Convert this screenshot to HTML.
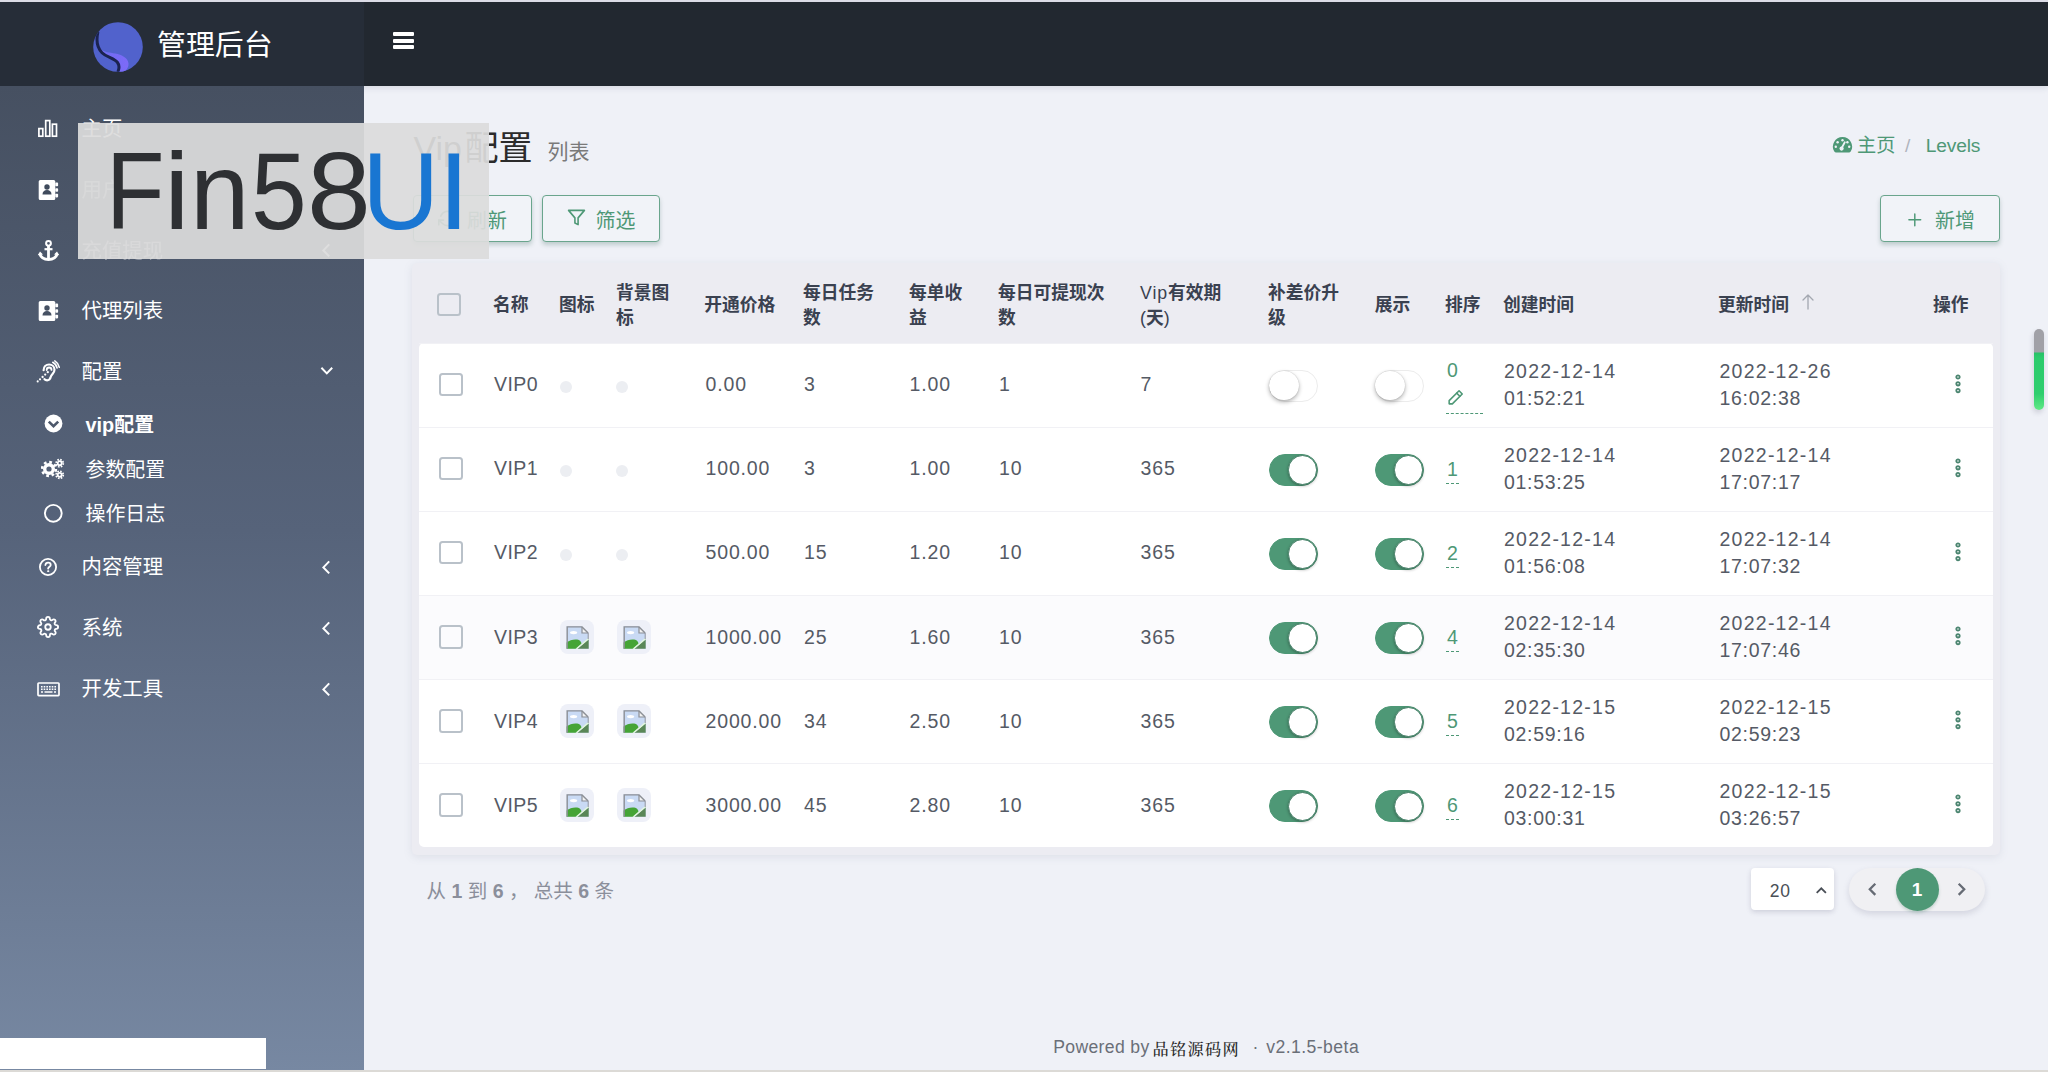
<!DOCTYPE html>
<html lang="zh-CN">
<head>
<meta charset="utf-8">
<title>管理后台</title>
<style>
*{box-sizing:border-box;margin:0;padding:0}
html,body{width:2048px;height:1072px;overflow:hidden}
body{position:relative;background:#eff1f7;font-family:"Liberation Sans","Noto Sans CJK SC",sans-serif;color:#414750;font-size:19.5px}
.abs,.row,.row>span,.side span,.side svg,.hd span{position:absolute}
#topline{position:absolute;left:0;top:0;width:2048px;height:2px;background:#dcdce6;z-index:9}
#nav{position:absolute;left:0;top:0;width:2048px;height:85.6px;background:#222830;box-shadow:0 2px 6px rgba(40,50,80,.12)}
#navl{position:absolute;left:0;top:0;width:364px;height:86px;background:#262d38}
#side{position:absolute;left:0;top:85.8px;width:364px;height:986.2px;background:linear-gradient(180deg,#465061 0%,#56637a 45%,#7788a2 100%)}
.logo{position:absolute;left:92.6px;top:21.6px;width:50px;height:50px}
.brand{position:absolute;left:157px;top:23.5px;font-size:28.9px;line-height:42px;color:#fff;white-space:nowrap}
.burger{position:absolute;left:393px;top:32px;width:21px;height:17px}
.burger i{position:absolute;left:0;width:21px;height:4px;background:#fff;border-radius:1px}
.mi{position:absolute;left:81.6px;color:#fff;font-size:20.4px;line-height:30px;white-space:nowrap}
.mi.sub{left:85.5px;font-size:19.9px}
.mi.b{font-weight:bold}
.ico{position:absolute}
.chev{position:absolute}
.title{position:absolute;left:414px;top:123px;font-size:34px;line-height:50px;color:#2b2b2b;white-space:nowrap}
.subt{position:absolute;left:547.5px;top:136px;font-size:21px;line-height:32px;color:#7a7a7a;white-space:nowrap}
.btn{position:absolute;top:194.7px;height:47.6px;border:1.2px solid #6aa58d;border-radius:4px;color:#4e9876;font-size:19.9px;line-height:48px;white-space:nowrap;background:#f1f3f8;box-shadow:0 3px 4px rgba(70,110,100,.28)}
.bc{position:absolute;top:130.8px;font-size:19.2px;line-height:30px;white-space:nowrap;color:#4e9876}
.card{position:absolute;left:412px;top:263px;width:1588px;height:592px;background:#ececf2;border-radius:5px;box-shadow:0 2px 8px rgba(120,125,150,.15)}
.tbody{position:absolute;left:419px;top:342.5px;width:1574px;height:504.3px;background:#fff;border-radius:5px}
.th{position:absolute;font-weight:bold;font-size:17.75px;line-height:24.8px;color:#3a4150;white-space:nowrap}
.row{left:419px;width:1574px;border-top:1px solid #f1f1f5}
.row:first-of-type{border-top:none}
.row .c{font-size:19.5px;line-height:28px;color:#555a65;white-space:nowrap;letter-spacing:.85px}
.row .nm{letter-spacing:.45px}
.tm{letter-spacing:.7px}
.row .dt{line-height:27.3px;letter-spacing:1.25px}
.cb{width:23.5px;height:23.5px;border:2px solid #b9c1c9;border-radius:3.5px;background:transparent}
.dot{width:12px;height:12px;border-radius:50%;background:#eceef2}
.imgbox{width:33.5px;height:34.2px;border-radius:8px;background:#eef0f8}
.imgbox svg{position:absolute;left:0;top:0}
.sw{width:49px;height:32px;border-radius:16px;background:#fff;border:1px solid #ececec}
.sw i{position:absolute;left:-.3px;top:.2px;width:29.4px;height:29.4px;border-radius:50%;background:#fff;box-shadow:0 2px 4px rgba(0,0,0,.3),0 0 1px rgba(0,0,0,.25)}
.sw.on{background:#4e9876;border-color:#4e9876}
.sw.on i{left:18.4px;top:.4px;width:29.2px;height:29.2px;border:1px solid #437f66;box-shadow:0 1px 3px rgba(0,0,0,.3)}
.ord{color:#4e9876;font-size:19.5px;line-height:28px;border-bottom:1px dashed #4e9876;white-space:nowrap;padding:0 1px}
.ord.first{width:37px;height:56.6px;line-height:26px}
.ord.first svg{position:absolute;left:0;top:30.8px}
.dots{width:10px;height:24px}.dots svg{display:block}
.dots i{position:absolute;left:.9px;width:5.3px;height:5.3px;border-radius:50%;border:1.85px solid #4b8570}
.dots i:nth-child(1){top:0}.dots i:nth-child(2){top:6.8px}.dots i:nth-child(3){top:13.6px}
.pginfo{position:absolute;left:426.5px;top:875.6px;font-size:19.5px;line-height:30px;color:#8b8f9b;white-space:nowrap}
.pginfo b{letter-spacing:0}
.sel{position:absolute;left:1750.7px;top:867.8px;width:83.3px;height:41.9px;background:#fff;border-radius:4px;box-shadow:0 2px 5px rgba(100,100,130,.24)}
.pill{position:absolute;left:1849.2px;top:867.6px;width:135.8px;height:43px;border-radius:22px;background:#f0f0f3;box-shadow:0 3px 6px rgba(100,100,130,.2)}
.pg1{position:absolute;left:1895.6px;top:867.7px;width:43px;height:43px;border-radius:50%;background:#4e9876;color:#fff;font-weight:bold;font-size:19px;line-height:43px;text-align:center;box-shadow:0 2px 3px rgba(60,120,90,.25)}
.foot{position:absolute;top:1032px;font-size:17.6px;line-height:30px;color:#6a6f78;white-space:nowrap}
.wm{position:absolute;left:78px;top:123px;width:411.3px;height:136.3px;background:rgba(219,219,219,.93)}
.wmt{position:absolute;top:136.3px;font-size:110px;line-height:110px;white-space:nowrap;color:#2e3033;transform-origin:0 0}
.wmt.bl{color:#1976d2}
.scr{position:absolute;left:2033.8px;top:329px;width:10px;height:80.7px;border-radius:5px;background:linear-gradient(180deg,#a1a1a7 0,#a1a1a7 28.5%,#27c267 29.5%,#2ccb6c 36%,#2fce6e 80%,#60e985 100%);box-shadow:-1px 3px 5px rgba(60,60,90,.18)}
.wbox{position:absolute;left:0;top:1038px;width:266px;height:31px;background:#fff}
.botline{position:absolute;left:0;top:1069.600px;width:2048px;height:2.400px;background:#dcdad6}

</style>
</head>
<body>
<div id="nav"></div>
<div id="navl"></div>
<div id="topline"></div>
<div id="side"></div>

<!-- logo -->
<svg class="logo" viewBox="0 0 50 50">
  <defs><clipPath id="lc"><circle cx="25" cy="25" r="24.8"/></clipPath>
  <filter id="lb" x="-20%" y="-20%" width="140%" height="140%"><feGaussianBlur stdDeviation="0.7"/></filter>
  <linearGradient id="lg" x1="0" y1="0" x2="1" y2="0"><stop offset="0" stop-color="#6d6cf0"/><stop offset="1" stop-color="#7d6bf8"/></linearGradient></defs>
  <circle cx="25" cy="25" r="24.8" fill="#5162cc"/>
  <g clip-path="url(#lc)">
    <path d="M7 26.500C11 30.500 17 30.500 22 31.500c7 1.300 13 4.500 13.500 10 .3 3-1.500 6-4 8.500h-5.500c1-3 1.500-6-1-9C21 36.500 13 36 7 26.500z" fill="url(#lg)" filter="url(#lb)"/>
    <path d="M4.800 10.500C3 19 4.300 26 9 30.700c5 5 12 5.300 15.500 9.800 2 2.600 1.800 5.500.7 8.500" fill="none" stroke="#1b2350" stroke-width="3" stroke-linecap="round"/>
  </g>
</svg>
<div class="brand">管理后台</div>
<div class="burger"><i style="top:0"></i><i style="top:6.7px"></i><i style="top:13.4px"></i></div>

<!-- sidebar menu -->
<div class="mi" style="top:114.3px">主页</div>
<div class="mi" style="top:175.3px;opacity:.55">用户</div>
<div class="mi" style="top:236.3px;opacity:.6">充值提现</div>
<div class="mi" style="top:296.3px">代理列表</div>
<div class="mi" style="top:357.3px">配置</div>
<div class="mi sub b" style="top:410.3px">vip配置</div>
<div class="mi sub" style="top:455.3px">参数配置</div>
<div class="mi sub" style="top:499.3px">操作日志</div>
<div class="mi" style="top:552.3px">内容管理</div>
<div class="mi" style="top:613.3px">系统</div>
<div class="mi" style="top:674.3px">开发工具</div>

<!-- icons -->
<svg class="ico" style="left:37px;top:118px" width="22" height="20" viewBox="0 0 22 20" fill="none" stroke="#fff" stroke-width="1.7"><rect x="1.9" y="10.6" width="3.9" height="7.6"/><rect x="8.7" y="2.6" width="4.1" height="15.6"/><rect x="15.4" y="6.2" width="4.1" height="12"/></svg>

<svg class="ico" style="left:38px;top:179px" width="21" height="22" viewBox="0 0 21 22"><path d="M2.3 1h13.4a1.6 1.6 0 0 1 1.6 1.6v16.8a1.6 1.6 0 0 1-1.6 1.6H2.3a1.6 1.6 0 0 1-1.6-1.6V2.600a1.6 1.600 0 0 1 1.600-1.600z" fill="#fff"/><rect x="17.3" y="3.6" width="2.8" height="3.6" rx=".8" fill="#fff"/><rect x="17.3" y="9.2" width="2.8" height="3.600" rx=".8" fill="#fff"/><rect x="17.3" y="14.8" width="2.8" height="3.600" rx=".8" fill="#fff"/><circle cx="9" cy="8" r="2.7" fill="#3f4a5c"/><path d="M4.500 15.500c0-3 1.800-4.600 4.500-4.600s4.500 1.600 4.500 4.600z" fill="#3f4a5c"/></svg>

<svg class="ico" style="left:37px;top:239px" width="23" height="23" viewBox="0 0 23 23" fill="none" stroke="#fff"><circle cx="11.5" cy="4.300" r="2.400" stroke-width="2"/><path d="M11.500 6.700V20" stroke-width="2.800"/><path d="M7.500 10.200h8" stroke-width="2.200"/><path d="M2.600 14.500c1.200 4 4.800 6 8.900 6s7.700-2 8.900-6" stroke-width="2.800"/><path d="M0.800 16.200l2.200-3.800 3 3.200z" fill="#fff" stroke="none"/><path d="M22.200 16.200l-2.200-3.800-3 3.200z" fill="#fff" stroke="none"/></svg>

<svg class="ico" style="left:38px;top:299.500px" width="21" height="22" viewBox="0 0 21 22"><path d="M2.3 1h13.4a1.6 1.6 0 0 1 1.6 1.6v16.8a1.6 1.6 0 0 1-1.6 1.6H2.3a1.6 1.6 0 0 1-1.6-1.6V2.600a1.6 1.600 0 0 1 1.600-1.600z" fill="#fff"/><rect x="17.3" y="3.6" width="2.8" height="3.6" rx=".8" fill="#fff"/><rect x="17.3" y="9.2" width="2.8" height="3.600" rx=".8" fill="#fff"/><rect x="17.3" y="14.8" width="2.8" height="3.600" rx=".8" fill="#fff"/><circle cx="9" cy="8" r="2.7" fill="#465163"/><path d="M4.500 15.500c0-3 1.800-4.600 4.500-4.600s4.500 1.600 4.500 4.600z" fill="#465163"/></svg>

<!-- ear / assistive listening -->
<svg class="ico" style="left:36px;top:360px" width="24" height="23" viewBox="0 0 24 23" fill="none" stroke="#fff" stroke-linecap="round"><path d="M7.600 10.200c0-3.500 2.500-5.700 5.500-5.700s5.400 2.200 5.400 5.300c0 3.500-3 4.200-3.700 7-.5 2-1.700 3.500-3.700 3.500-1.100 0-2-.4-2.600-1.100" stroke-width="2.200"/><path d="M10.700 10c0-1.500 1-2.500 2.400-2.500s2.400 1 2.400 2.400" stroke-width="1.800"/><path d="M16.800 2.300c2.200 1.200 3.700 3.200 4.200 5.600" stroke-width="1.700"/><path d="M18.800 0.900c2.300 1.500 3.900 3.700 4.500 6.400" stroke-width="1.500"/><circle cx="11.800" cy="12.200" r="1.150" fill="#fff" stroke="none"/><circle cx="9.200" cy="14.600" r="1.150" fill="#fff" stroke="none"/><circle cx="6.600" cy="17" r="1.150" fill="#fff" stroke="none"/><circle cx="4" cy="19.300" r="1.100" fill="#fff" stroke="none"/><circle cx="1.700" cy="21.400" r="1.050" fill="#fff" stroke="none"/></svg>

<!-- chevron circle down -->
<svg class="ico" style="left:44px;top:414.200px" width="19" height="19" viewBox="0 0 19 19"><circle cx="9.500" cy="9.500" r="8.900" fill="#fff"/><path d="M4.800 7.600l4.700 4.600 4.700-4.600" fill="none" stroke="#4d586b" stroke-width="2.600"/></svg>

<!-- cogs -->
<svg class="ico" style="left:41px;top:458px" width="24" height="22" viewBox="0 0 24 22" fill="none" stroke="#fff"><circle cx="8" cy="11" r="4.300" stroke-width="3.400"/><circle cx="8" cy="11" r="6.900" stroke-width="2.600" stroke-dasharray="2.700 2.720"/><circle cx="18.700" cy="5.200" r="2" stroke-width="1.800"/><circle cx="18.700" cy="5.200" r="3.600" stroke-width="1.700" stroke-dasharray="1.600 1.230"/><circle cx="18.700" cy="16.800" r="2" stroke-width="1.800"/><circle cx="18.700" cy="16.800" r="3.600" stroke-width="1.700" stroke-dasharray="1.600 1.230"/></svg>

<!-- circle-o -->
<svg class="ico" style="left:43px;top:503px" width="21" height="21" viewBox="0 0 21 21"><circle cx="10.300" cy="10.300" r="8.400" fill="none" stroke="#fff" stroke-width="1.900"/></svg>

<!-- question circle -->
<svg class="ico" style="left:37.500px;top:556.500px" width="20" height="20" viewBox="0 0 20 20" fill="none" stroke="#fff" stroke-width="1.800" stroke-linecap="round"><circle cx="10" cy="10" r="8.100"/><path d="M7.400 8c.2-1.500 1.300-2.300 2.700-2.300 1.500 0 2.600.9 2.600 2.200 0 1.700-2.500 1.900-2.600 3.700" /><circle cx="10.100" cy="14.200" r=".6" fill="#fff" stroke-width="1"/></svg>

<!-- gear (feather settings) -->
<svg class="ico" style="left:36.500px;top:616px" width="22" height="22" viewBox="0 0 24 24" fill="none" stroke="#fff" stroke-width="2" stroke-linecap="round" stroke-linejoin="round"><circle cx="12" cy="12" r="3"/><path d="M19.400 15a1.650 1.650 0 0 0 .33 1.820l.06.060a2 2 0 0 1 0 2.830 2 2 0 0 1-2.830 0l-.06-.06a1.650 1.650 0 0 0-1.820-.33 1.650 1.650 0 0 0-1 1.510V21a2 2 0 0 1-2 2 2 2 0 0 1-2-2v-.09A1.650 1.650 0 0 0 9 19.400a1.650 1.650 0 0 0-1.820.33l-.06.060a2 2 0 0 1-2.830 0 2 2 0 0 1 0-2.830l.06-.06a1.650 1.650 0 0 0 .33-1.820 1.650 1.650 0 0 0-1.510-1H3a2 2 0 0 1-2-2 2 2 0 0 1 2-2h.09A1.650 1.650 0 0 0 4.600 9a1.650 1.650 0 0 0-.33-1.820l-.06-.06a2 2 0 0 1 0-2.830 2 2 0 0 1 2.830 0l.06.060a1.650 1.650 0 0 0 1.820.33H9a1.650 1.650 0 0 0 1-1.510V3a2 2 0 0 1 2-2 2 2 0 0 1 2 2v.09a1.650 1.650 0 0 0 1 1.510 1.650 1.650 0 0 0 1.820-.33l.06-.06a2 2 0 0 1 2.830 0 2 2 0 0 1 0 2.830l-.06.060a1.650 1.650 0 0 0-.33 1.820V9a1.650 1.650 0 0 0 1.510 1H21a2 2 0 0 1 2 2 2 2 0 0 1-2 2h-.09a1.650 1.650 0 0 0-1.510 1z"/></svg>

<!-- keyboard -->
<svg class="ico" style="left:36.500px;top:681.500px" width="23" height="15" viewBox="0 0 23 15" fill="none" stroke="#fff"><rect x="1" y="1" width="21" height="12.600" rx=".8" stroke-width="1.700"/><path d="M4 4.800h15M4 7.300h15" stroke-width="1.500" stroke-dasharray="1.600 1.080"/><path d="M4 10h2M7.500 10h8M17 10h2" stroke-width="1.500"/></svg>

<!-- chevrons -->
<svg class="chev" style="left:320px;top:366px" width="14" height="10" viewBox="0 0 14 10" fill="none" stroke="#fff" stroke-width="2"><path d="M1.400 1.800l5.400 5.600 5.400-5.600"/></svg>
<svg class="chev" style="left:321px;top:560px" width="10" height="15" viewBox="0 0 10 15" fill="none" stroke="#fff" stroke-width="2"><path d="M8.200 1.400l-5.800 6 5.800 6"/></svg>
<svg class="chev" style="left:321px;top:621px" width="10" height="15" viewBox="0 0 10 15" fill="none" stroke="#fff" stroke-width="2"><path d="M8.200 1.400l-5.800 6 5.800 6"/></svg>
<svg class="chev" style="left:321px;top:682px" width="10" height="15" viewBox="0 0 10 15" fill="none" stroke="#fff" stroke-width="2"><path d="M8.200 1.400l-5.800 6 5.800 6"/></svg>
<svg class="chev" style="left:321px;top:243px" width="10" height="15" viewBox="0 0 10 15" fill="none" stroke="#fff" stroke-width="2"><path d="M8.200 1.400l-5.800 6 5.800 6"/></svg>

<div class="wbox"></div>

<!-- content header -->
<div class="title" style="left:413.5px">Vip<span style="margin-left:2.4px">配置</span></div>
<div class="subt">列表</div>
<div class="bc" style="left:1857px">主页</div>
<div class="bc" style="left:1905px;color:#b0b4bd">/</div>
<div class="bc" style="left:1925.700px;letter-spacing:-.15px">Levels</div>
<svg class="abs" style="left:1832px;top:136px" width="21" height="18" viewBox="0 0 21 18"><path d="M10.500 1a9.600 9.600 0 0 0-8.200 14.600c.3.500.8.800 1.400.8h13.600c.6 0 1.100-.3 1.400-.8A9.600 9.600 0 0 0 10.500 1z" fill="#4e9876"/><circle cx="10.500" cy="4.200" r="1.200" fill="#eff1f7"/><circle cx="5.600" cy="6.200" r="1.200" fill="#eff1f7"/><circle cx="15.400" cy="6.200" r="1.200" fill="#eff1f7"/><circle cx="3.800" cy="10.800" r="1.200" fill="#eff1f7"/><circle cx="17.200" cy="10.800" r="1.200" fill="#eff1f7"/><path d="M9 13.200l3.800-7" stroke="#eff1f7" stroke-width="1.800" stroke-linecap="round"/><circle cx="9.600" cy="12.600" r="2.100" fill="#eff1f7"/></svg>

<div class="btn" style="left:413px;width:118.500px"><svg class="abs" style="left:24px;top:13px" width="19" height="19" viewBox="0 0 24 24" fill="none" stroke="#4e9876" stroke-width="2" stroke-linecap="round" stroke-linejoin="round"><path d="M23 4v6h-6"/><path d="M1 20v-6h6"/><path d="M3.500 9a9 9 0 0 1 14.850-3.360L23 10M1 14l4.640 4.360A9 9 0 0 0 20.500 15"/></svg><span class="abs" style="left:53px;top:1.2px">刷新</span></div>
<div class="btn" style="left:541.500px;width:118px"><svg class="abs" style="left:24.500px;top:12.500px" width="19" height="19" viewBox="0 0 24 24" fill="none" stroke="#4e9876" stroke-width="2" stroke-linecap="round" stroke-linejoin="round"><path d="M22 3H2l8 9.460V19l4 2v-8.540z"/></svg><span class="abs" style="left:53px;top:1.2px">筛选</span></div>
<div class="btn" style="left:1880px;width:120px"><svg class="abs" style="left:27.3px;top:17.3px" width="13.6" height="13.6" viewBox="0 0 15 15" fill="none" stroke="#4e9876" stroke-width="1.600" stroke-linecap="round"><path d="M7.500 1v13M1 7.500h13"/></svg><span class="abs" style="left:54px;top:1.2px">新增</span></div>

<!-- table -->
<div class="card"></div>
<div class="tbody"></div>
<span class="cb abs" style="left:437px;top:292.500px"></span>
<div class="th" style="left:493px;top:292.7px">名称</div>
<div class="th" style="left:559px;top:292.7px">图标</div>
<div class="th" style="left:616px;top:280.8px">背景图<br>标</div>
<div class="th" style="left:704.2px;top:292.7px">开通价格</div>
<div class="th" style="left:803px;top:280.8px">每日任务<br>数</div>
<div class="th" style="left:909px;top:280.8px">每单收<br>益</div>
<div class="th" style="left:998px;top:280.8px">每日可提现次<br>数</div>
<div class="th" style="left:1140px;top:280.8px"><span style="font-weight:normal;letter-spacing:.9px">Vip</span>有效期<br><span style="font-weight:normal">(</span>天<span style="font-weight:normal">)</span></div>
<div class="th" style="left:1267.9px;top:280.8px">补差价升<br>级</div>
<div class="th" style="left:1374.8px;top:292.7px">展示</div>
<div class="th" style="left:1445px;top:292.7px">排序</div>
<div class="th" style="left:1503px;top:292.7px">创建时间</div>
<div class="th" style="left:1718px;top:292.7px">更新时间</div>
<svg class="abs" style="left:1801px;top:293px" width="14" height="18" viewBox="0 0 14 18" fill="none" stroke="#a3a7b0" stroke-width="1.300" stroke-linecap="round" stroke-linejoin="round"><path d="M7 16V2M2 7l5-5 5 5"/></svg>
<div class="th" style="left:1933px;top:292.7px">操作</div>
<div class="row" style="top:342.50px;height:84.05px">
<span class="cb" style="left:20.3px;top:29.4px"></span>
<span class="c nm" style="left:75px;top:26.9px">VIP0</span>
<span class="dot" style="left:141px;top:37.3px"></span>
<span class="dot" style="left:197.3px;top:37.3px"></span>
<span class="c" style="left:286.5px;top:26.9px">0.00</span>
<span class="c" style="left:385px;top:26.9px">3</span>
<span class="c" style="left:490.5px;top:26.9px">1.00</span>
<span class="c" style="left:580px;top:26.9px">1</span>
<span class="c" style="left:721.5px;top:26.9px">7</span>
<span class="sw" style="left:849.5px;top:26.4px"><i></i></span>
<span class="sw" style="left:955.5px;top:26.4px"><i></i></span>
<span class="ord first" style="left:1027px;top:13.6px">0<br><svg width="19" height="19" viewBox="0 0 24 24" fill="none" stroke="#4e9876" stroke-width="2" stroke-linecap="round" stroke-linejoin="round"><path d="M16.5 3.5l4 4L8 20H4v-4z"/><path d="M13.5 6.5l4 4"/></svg></span>
<span class="c dt" style="left:1085px;top:14.3px">2022-12-14<br><span class="tm">01:52:21</span></span>
<span class="c dt" style="left:1300.5px;top:14.3px">2022-12-26<br><span class="tm">16:02:38</span></span>
<span class="dots" style="left:1534px;top:28.5px"><svg width="10" height="24" viewBox="0 0 10 24" fill="none" stroke="#4b8570" stroke-width="1.8"><circle cx="5" cy="5" r="1.7"/><circle cx="5" cy="11.8" r="1.7"/><circle cx="5" cy="18.6" r="1.7"/></svg></span>
</div>
<div class="row" style="top:426.55px;height:84.05px">
<span class="cb" style="left:20.3px;top:29.4px"></span>
<span class="c nm" style="left:75px;top:26.9px">VIP1</span>
<span class="dot" style="left:141px;top:37.3px"></span>
<span class="dot" style="left:197.3px;top:37.3px"></span>
<span class="c" style="left:286.5px;top:26.9px">100.00</span>
<span class="c" style="left:385px;top:26.9px">3</span>
<span class="c" style="left:490.5px;top:26.9px">1.00</span>
<span class="c" style="left:580px;top:26.9px">10</span>
<span class="c" style="left:721.5px;top:26.9px">365</span>
<span class="sw on" style="left:849.5px;top:26.4px"><i></i></span>
<span class="sw on" style="left:955.5px;top:26.4px"><i></i></span>
<span class="ord" style="left:1027px;top:27.7px">1</span>
<span class="c dt" style="left:1085px;top:14.3px">2022-12-14<br><span class="tm">01:53:25</span></span>
<span class="c dt" style="left:1300.5px;top:14.3px">2022-12-14<br><span class="tm">17:07:17</span></span>
<span class="dots" style="left:1534px;top:28.5px"><svg width="10" height="24" viewBox="0 0 10 24" fill="none" stroke="#4b8570" stroke-width="1.8"><circle cx="5" cy="5" r="1.7"/><circle cx="5" cy="11.8" r="1.7"/><circle cx="5" cy="18.6" r="1.7"/></svg></span>
</div>
<div class="row" style="top:510.60px;height:84.05px">
<span class="cb" style="left:20.3px;top:29.4px"></span>
<span class="c nm" style="left:75px;top:26.9px">VIP2</span>
<span class="dot" style="left:141px;top:37.3px"></span>
<span class="dot" style="left:197.3px;top:37.3px"></span>
<span class="c" style="left:286.5px;top:26.9px">500.00</span>
<span class="c" style="left:385px;top:26.9px">15</span>
<span class="c" style="left:490.5px;top:26.9px">1.20</span>
<span class="c" style="left:580px;top:26.9px">10</span>
<span class="c" style="left:721.5px;top:26.9px">365</span>
<span class="sw on" style="left:849.5px;top:26.4px"><i></i></span>
<span class="sw on" style="left:955.5px;top:26.4px"><i></i></span>
<span class="ord" style="left:1027px;top:27.7px">2</span>
<span class="c dt" style="left:1085px;top:14.3px">2022-12-14<br><span class="tm">01:56:08</span></span>
<span class="c dt" style="left:1300.5px;top:14.3px">2022-12-14<br><span class="tm">17:07:32</span></span>
<span class="dots" style="left:1534px;top:28.5px"><svg width="10" height="24" viewBox="0 0 10 24" fill="none" stroke="#4b8570" stroke-width="1.8"><circle cx="5" cy="5" r="1.7"/><circle cx="5" cy="11.8" r="1.7"/><circle cx="5" cy="18.6" r="1.7"/></svg></span>
</div>
<div class="row" style="top:594.65px;height:84.05px;background:#fbfbfd">
<span class="cb" style="left:20.3px;top:29.4px"></span>
<span class="c nm" style="left:75px;top:26.9px">VIP3</span>
<span class="imgbox" style="left:141.2px;top:24.3px"><svg width="34" height="34" viewBox="0 0 34 34"><path d="M6.6 6.3h15.600l6.500 6.500v15.900H6.600z" fill="#c9daf4"/><path d="M6.600 28.700v-6.200c3-2.300 6.800-3.500 10.600-3 2.600.3 4.200 2.200 4.400 4.600l-5.500 4.600z" fill="#45a436"/><path d="M17.400 28.700l11.300-9.400v9.400z" fill="#5a8757"/><path d="M15.500 28.700h2.100l11.100-9.300v-1.900z" fill="#e2f6dd"/><ellipse cx="13.600" cy="12.600" rx="3.600" ry="1.700" fill="#fff"/><path d="M22.200 6.300v6.500h6.500z" fill="#f3f3f3"/><path d="M7.200 28.700V6.900h14.800l6.100 6.100" fill="none" stroke="#8d9096" stroke-width="1.400"/><path d="M22 6.900v6.100h6.100" fill="none" stroke="#8d9096" stroke-width="1.200"/><path d="M28.200 13v6" fill="none" stroke="#9a9da6" stroke-width="1.100"/></svg></span>
<span class="imgbox" style="left:198.3px;top:24.3px"><svg width="34" height="34" viewBox="0 0 34 34"><path d="M6.6 6.3h15.600l6.500 6.500v15.900H6.600z" fill="#c9daf4"/><path d="M6.600 28.700v-6.200c3-2.300 6.800-3.500 10.600-3 2.600.3 4.200 2.200 4.400 4.600l-5.500 4.600z" fill="#45a436"/><path d="M17.400 28.700l11.300-9.400v9.400z" fill="#5a8757"/><path d="M15.500 28.700h2.100l11.100-9.300v-1.900z" fill="#e2f6dd"/><ellipse cx="13.600" cy="12.600" rx="3.600" ry="1.700" fill="#fff"/><path d="M22.200 6.300v6.500h6.500z" fill="#f3f3f3"/><path d="M7.200 28.700V6.900h14.800l6.100 6.100" fill="none" stroke="#8d9096" stroke-width="1.400"/><path d="M22 6.900v6.100h6.100" fill="none" stroke="#8d9096" stroke-width="1.200"/><path d="M28.200 13v6" fill="none" stroke="#9a9da6" stroke-width="1.100"/></svg></span>
<span class="c" style="left:286.5px;top:26.9px">1000.00</span>
<span class="c" style="left:385px;top:26.9px">25</span>
<span class="c" style="left:490.5px;top:26.9px">1.60</span>
<span class="c" style="left:580px;top:26.9px">10</span>
<span class="c" style="left:721.5px;top:26.9px">365</span>
<span class="sw on" style="left:849.5px;top:26.4px"><i></i></span>
<span class="sw on" style="left:955.5px;top:26.4px"><i></i></span>
<span class="ord" style="left:1027px;top:27.7px">4</span>
<span class="c dt" style="left:1085px;top:14.3px">2022-12-14<br><span class="tm">02:35:30</span></span>
<span class="c dt" style="left:1300.5px;top:14.3px">2022-12-14<br><span class="tm">17:07:46</span></span>
<span class="dots" style="left:1534px;top:28.5px"><svg width="10" height="24" viewBox="0 0 10 24" fill="none" stroke="#4b8570" stroke-width="1.8"><circle cx="5" cy="5" r="1.7"/><circle cx="5" cy="11.8" r="1.7"/><circle cx="5" cy="18.6" r="1.7"/></svg></span>
</div>
<div class="row" style="top:678.70px;height:84.05px">
<span class="cb" style="left:20.3px;top:29.4px"></span>
<span class="c nm" style="left:75px;top:26.9px">VIP4</span>
<span class="imgbox" style="left:141.2px;top:24.3px"><svg width="34" height="34" viewBox="0 0 34 34"><path d="M6.6 6.3h15.600l6.500 6.500v15.900H6.600z" fill="#c9daf4"/><path d="M6.600 28.700v-6.200c3-2.300 6.800-3.500 10.600-3 2.600.3 4.200 2.200 4.400 4.600l-5.500 4.600z" fill="#45a436"/><path d="M17.400 28.700l11.300-9.400v9.400z" fill="#5a8757"/><path d="M15.500 28.700h2.100l11.100-9.300v-1.900z" fill="#e2f6dd"/><ellipse cx="13.600" cy="12.600" rx="3.600" ry="1.700" fill="#fff"/><path d="M22.200 6.300v6.500h6.500z" fill="#f3f3f3"/><path d="M7.200 28.700V6.900h14.800l6.100 6.100" fill="none" stroke="#8d9096" stroke-width="1.400"/><path d="M22 6.900v6.100h6.100" fill="none" stroke="#8d9096" stroke-width="1.200"/><path d="M28.200 13v6" fill="none" stroke="#9a9da6" stroke-width="1.100"/></svg></span>
<span class="imgbox" style="left:198.3px;top:24.3px"><svg width="34" height="34" viewBox="0 0 34 34"><path d="M6.6 6.3h15.600l6.500 6.500v15.900H6.600z" fill="#c9daf4"/><path d="M6.600 28.700v-6.200c3-2.300 6.800-3.500 10.600-3 2.600.3 4.200 2.200 4.400 4.600l-5.500 4.600z" fill="#45a436"/><path d="M17.400 28.700l11.300-9.400v9.400z" fill="#5a8757"/><path d="M15.500 28.700h2.100l11.100-9.300v-1.900z" fill="#e2f6dd"/><ellipse cx="13.600" cy="12.600" rx="3.600" ry="1.700" fill="#fff"/><path d="M22.200 6.300v6.500h6.500z" fill="#f3f3f3"/><path d="M7.200 28.700V6.900h14.800l6.100 6.100" fill="none" stroke="#8d9096" stroke-width="1.400"/><path d="M22 6.900v6.100h6.100" fill="none" stroke="#8d9096" stroke-width="1.200"/><path d="M28.200 13v6" fill="none" stroke="#9a9da6" stroke-width="1.100"/></svg></span>
<span class="c" style="left:286.5px;top:26.9px">2000.00</span>
<span class="c" style="left:385px;top:26.9px">34</span>
<span class="c" style="left:490.5px;top:26.9px">2.50</span>
<span class="c" style="left:580px;top:26.9px">10</span>
<span class="c" style="left:721.5px;top:26.9px">365</span>
<span class="sw on" style="left:849.5px;top:26.4px"><i></i></span>
<span class="sw on" style="left:955.5px;top:26.4px"><i></i></span>
<span class="ord" style="left:1027px;top:27.7px">5</span>
<span class="c dt" style="left:1085px;top:14.3px">2022-12-15<br><span class="tm">02:59:16</span></span>
<span class="c dt" style="left:1300.5px;top:14.3px">2022-12-15<br><span class="tm">02:59:23</span></span>
<span class="dots" style="left:1534px;top:28.5px"><svg width="10" height="24" viewBox="0 0 10 24" fill="none" stroke="#4b8570" stroke-width="1.8"><circle cx="5" cy="5" r="1.7"/><circle cx="5" cy="11.8" r="1.7"/><circle cx="5" cy="18.6" r="1.7"/></svg></span>
</div>
<div class="row" style="top:762.75px;height:84.05px">
<span class="cb" style="left:20.3px;top:29.4px"></span>
<span class="c nm" style="left:75px;top:26.9px">VIP5</span>
<span class="imgbox" style="left:141.2px;top:24.3px"><svg width="34" height="34" viewBox="0 0 34 34"><path d="M6.6 6.3h15.600l6.500 6.500v15.900H6.600z" fill="#c9daf4"/><path d="M6.600 28.700v-6.200c3-2.300 6.800-3.500 10.600-3 2.600.3 4.200 2.200 4.400 4.600l-5.500 4.600z" fill="#45a436"/><path d="M17.400 28.700l11.300-9.400v9.400z" fill="#5a8757"/><path d="M15.500 28.700h2.100l11.100-9.300v-1.900z" fill="#e2f6dd"/><ellipse cx="13.600" cy="12.600" rx="3.600" ry="1.700" fill="#fff"/><path d="M22.200 6.300v6.500h6.500z" fill="#f3f3f3"/><path d="M7.200 28.700V6.900h14.800l6.100 6.100" fill="none" stroke="#8d9096" stroke-width="1.400"/><path d="M22 6.900v6.100h6.100" fill="none" stroke="#8d9096" stroke-width="1.200"/><path d="M28.200 13v6" fill="none" stroke="#9a9da6" stroke-width="1.100"/></svg></span>
<span class="imgbox" style="left:198.3px;top:24.3px"><svg width="34" height="34" viewBox="0 0 34 34"><path d="M6.6 6.3h15.600l6.500 6.500v15.900H6.600z" fill="#c9daf4"/><path d="M6.600 28.700v-6.200c3-2.300 6.800-3.500 10.600-3 2.600.3 4.200 2.200 4.400 4.600l-5.500 4.600z" fill="#45a436"/><path d="M17.400 28.700l11.300-9.400v9.400z" fill="#5a8757"/><path d="M15.500 28.700h2.100l11.100-9.300v-1.900z" fill="#e2f6dd"/><ellipse cx="13.600" cy="12.600" rx="3.600" ry="1.700" fill="#fff"/><path d="M22.200 6.300v6.500h6.500z" fill="#f3f3f3"/><path d="M7.200 28.700V6.900h14.800l6.100 6.100" fill="none" stroke="#8d9096" stroke-width="1.400"/><path d="M22 6.900v6.100h6.100" fill="none" stroke="#8d9096" stroke-width="1.200"/><path d="M28.200 13v6" fill="none" stroke="#9a9da6" stroke-width="1.100"/></svg></span>
<span class="c" style="left:286.5px;top:26.9px">3000.00</span>
<span class="c" style="left:385px;top:26.9px">45</span>
<span class="c" style="left:490.5px;top:26.9px">2.80</span>
<span class="c" style="left:580px;top:26.9px">10</span>
<span class="c" style="left:721.5px;top:26.9px">365</span>
<span class="sw on" style="left:849.5px;top:26.4px"><i></i></span>
<span class="sw on" style="left:955.5px;top:26.4px"><i></i></span>
<span class="ord" style="left:1027px;top:27.7px">6</span>
<span class="c dt" style="left:1085px;top:14.3px">2022-12-15<br><span class="tm">03:00:31</span></span>
<span class="c dt" style="left:1300.5px;top:14.3px">2022-12-15<br><span class="tm">03:26:57</span></span>
<span class="dots" style="left:1534px;top:28.5px"><svg width="10" height="24" viewBox="0 0 10 24" fill="none" stroke="#4b8570" stroke-width="1.8"><circle cx="5" cy="5" r="1.7"/><circle cx="5" cy="11.8" r="1.7"/><circle cx="5" cy="18.6" r="1.7"/></svg></span>
</div>
<div class="pginfo">从 <b>1</b> 到 <b>6</b> ， 总共 <b>6</b> 条</div>
<div class="sel"><span class="abs" style="left:19px;top:7.8px;font-size:17.500px;line-height:30px;color:#4a4f57;letter-spacing:.8px">20</span><svg class="abs" style="left:64.5px;top:18.6px" width="13" height="9" viewBox="0 0 13 9" fill="none" stroke="#4a4f57" stroke-width="1.800"><path d="M1.700 6.900l4.600-4.600 4.600 4.600"/></svg></div>
<div class="pill"><svg class="abs" style="left:18px;top:13.4px" width="11" height="17" viewBox="0 0 11 17" fill="none" stroke="#666b74" stroke-width="2.300"><path d="M8.300 2.700l-5.500 5.600 5.500 5.600"/></svg><svg class="abs" style="left:106.500px;top:13.4px" width="11" height="17" viewBox="0 0 11 17" fill="none" stroke="#666b74" stroke-width="2.300"><path d="M2.700 2.700l5.500 5.600-5.500 5.600"/></svg></div>
<div class="pg1">1</div>
<div class="scr"></div>
<div class="foot" style="left:1053.2px;letter-spacing:.35px">Powered by</div>
<div class="foot" style="left:1152.6px;top:1034.5px;font-family:'Liberation Serif','Noto Serif CJK SC',serif;color:#2a2a2a;font-weight:500;font-size:16.2px;letter-spacing:1.3px">品铭源码网</div>
<div class="foot" style="left:1252.5px">·</div>
<div class="foot" style="left:1266.2px;letter-spacing:.45px">v2.1.5-beta</div>

<!-- watermark -->
<div class="wm"></div>
<span class="wmt" style="left:105.85px;transform:scaleX(0.87)">F</span><span class="wmt" style="left:163.87px;transform:scaleX(1.05)">i</span><span class="wmt" style="left:190.1px;transform:scaleX(0.9716)">n</span><span class="wmt" style="left:250.69px;transform:scaleX(0.9107)">5</span><span class="wmt" style="left:306.5px;transform:scaleX(1.0444)">8</span><span class="wmt bl" style="left:362.43px;transform:scaleX(0.9749)">U</span><span class="wmt bl" style="left:437.5px;transform:scaleX(1.034)">I</span>
<div class="botline"></div>
</body>
</html>
